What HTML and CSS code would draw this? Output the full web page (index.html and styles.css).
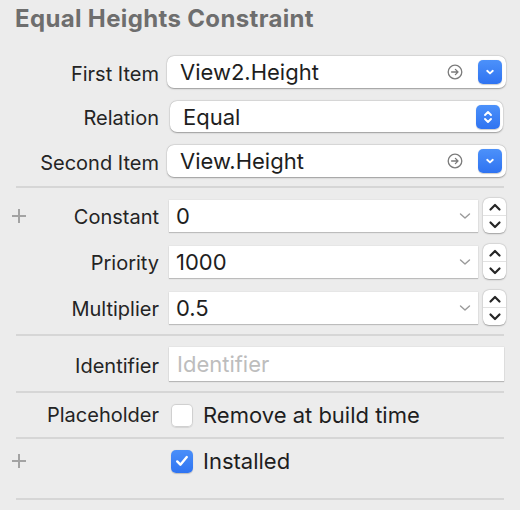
FILE: index.html
```html
<!DOCTYPE html>
<html>
<head>
<meta charset="utf-8">
<link rel="stylesheet" href="styles.css">
</head>
<body>
<div class="panel">
  <h1 class="title">Equal Heights Constraint</h1>

  <div class="group g-items">
    <div class="row">
      <div class="label"><span class="txt">First Item</span></div>
      <div class="popup">
        <span class="value">View2.Height</span>
        <svg class="go" width="16" height="16" viewBox="0 0 16 16"><circle cx="8" cy="8" r="6.8" fill="none" stroke="#7b7b7b" stroke-width="1.3"/><path d="M4.6 8h6.4M8.4 5.4L11 8l-2.6 2.6" fill="none" stroke="#7b7b7b" stroke-width="1.3" stroke-linecap="round" stroke-linejoin="round"/></svg>
        <span class="bluebtn"><svg width="12" height="12" viewBox="0 0 12 12"><path d="M3.2 4.8L6 7.4l2.8-2.6" fill="none" stroke="#fff" stroke-width="1.9" stroke-linecap="round" stroke-linejoin="round"/></svg></span>
      </div>
    </div>
    <div class="row">
      <div class="label"><span class="txt">Relation</span></div>
      <div class="popup popup-inset">
        <span class="value">Equal</span>
        <span class="bluebtn"><svg width="14" height="18" viewBox="0 0 14 18"><path d="M4 7l3-3 3 3M4 11l3 3 3-3" fill="none" stroke="#fff" stroke-width="1.9" stroke-linecap="round" stroke-linejoin="round"/></svg></span>
      </div>
    </div>
    <div class="row">
      <div class="label"><span class="txt">Second Item</span></div>
      <div class="popup">
        <span class="value">View.Height</span>
        <svg class="go" width="16" height="16" viewBox="0 0 16 16"><circle cx="8" cy="8" r="6.8" fill="none" stroke="#7b7b7b" stroke-width="1.3"/><path d="M4.6 8h6.4M8.4 5.4L11 8l-2.6 2.6" fill="none" stroke="#7b7b7b" stroke-width="1.3" stroke-linecap="round" stroke-linejoin="round"/></svg>
        <span class="bluebtn"><svg width="12" height="12" viewBox="0 0 12 12"><path d="M3.2 4.8L6 7.4l2.8-2.6" fill="none" stroke="#fff" stroke-width="1.9" stroke-linecap="round" stroke-linejoin="round"/></svg></span>
      </div>
    </div>
  </div>

  <div class="sep"></div>

  <div class="group g-values">
    <div class="row row-step">
      <div class="label"><span class="plus"></span><span class="txt">Constant</span></div>
      <div class="combo-wrap">
        <div class="combo">
          <span class="value">0</span>
          <svg class="chev" width="12" height="8" viewBox="0 0 12 8"><path d="M1.5 2l4.5 4 4.5-4" fill="none" stroke="#9a9a9a" stroke-width="1.4" stroke-linecap="round" stroke-linejoin="round"/></svg>
        </div>
        <div class="stepper">
          <span class="half"><svg width="14" height="10" viewBox="0 0 14 10"><path d="M2.5 7.5L7 3l4.5 4.5" fill="none" stroke="#262626" stroke-width="2.2" stroke-linecap="round" stroke-linejoin="round"/></svg></span>
          <span class="half half-down"><svg width="14" height="10" viewBox="0 0 14 10"><path d="M2.5 2.5L7 7l4.5-4.5" fill="none" stroke="#262626" stroke-width="2.2" stroke-linecap="round" stroke-linejoin="round"/></svg></span>
        </div>
      </div>
    </div>
    <div class="row row-step">
      <div class="label"><span class="txt">Priority</span></div>
      <div class="combo-wrap">
        <div class="combo">
          <span class="value">1000</span>
          <svg class="chev" width="12" height="8" viewBox="0 0 12 8"><path d="M1.5 2l4.5 4 4.5-4" fill="none" stroke="#9a9a9a" stroke-width="1.4" stroke-linecap="round" stroke-linejoin="round"/></svg>
        </div>
        <div class="stepper">
          <span class="half"><svg width="14" height="10" viewBox="0 0 14 10"><path d="M2.5 7.5L7 3l4.5 4.5" fill="none" stroke="#262626" stroke-width="2.2" stroke-linecap="round" stroke-linejoin="round"/></svg></span>
          <span class="half half-down"><svg width="14" height="10" viewBox="0 0 14 10"><path d="M2.5 2.5L7 7l4.5-4.5" fill="none" stroke="#262626" stroke-width="2.2" stroke-linecap="round" stroke-linejoin="round"/></svg></span>
        </div>
      </div>
    </div>
    <div class="row row-step">
      <div class="label"><span class="txt">Multiplier</span></div>
      <div class="combo-wrap">
        <div class="combo">
          <span class="value">0.5</span>
          <svg class="chev" width="12" height="8" viewBox="0 0 12 8"><path d="M1.5 2l4.5 4 4.5-4" fill="none" stroke="#9a9a9a" stroke-width="1.4" stroke-linecap="round" stroke-linejoin="round"/></svg>
        </div>
        <div class="stepper">
          <span class="half"><svg width="14" height="10" viewBox="0 0 14 10"><path d="M2.5 7.5L7 3l4.5 4.5" fill="none" stroke="#262626" stroke-width="2.2" stroke-linecap="round" stroke-linejoin="round"/></svg></span>
          <span class="half half-down"><svg width="14" height="10" viewBox="0 0 14 10"><path d="M2.5 2.5L7 7l4.5-4.5" fill="none" stroke="#262626" stroke-width="2.2" stroke-linecap="round" stroke-linejoin="round"/></svg></span>
        </div>
      </div>
    </div>
  </div>

  <div class="sep"></div>

  <div class="group g-ident">
    <div class="row">
      <div class="label"><span class="txt">Identifier</span></div>
      <div class="textfield"><span class="placeholder">Identifier</span></div>
    </div>
  </div>

  <div class="sep"></div>

  <div class="group g-place">
    <div class="row">
      <div class="label"><span class="txt">Placeholder</span></div>
      <div class="check-row">
        <span class="checkbox"></span>
        <span class="value">Remove at build time</span>
      </div>
    </div>
  </div>

  <div class="sep"></div>

  <div class="group g-install">
    <div class="row">
      <div class="label"><span class="plus"></span></div>
      <div class="check-row">
        <span class="checkbox checked"><svg width="18" height="18" viewBox="0 0 18 18"><path d="M4.2 9.4l3.2 3.3 6.4-7.6" fill="none" stroke="#fff" stroke-width="2.4" stroke-linecap="round" stroke-linejoin="round"/></svg></span>
        <span class="value">Installed</span>
      </div>
    </div>
  </div>

  <div class="sep"></div>
</div>
</body>
</html>
```

FILE: styles.css
```css
* { box-sizing: border-box; }

html, body {
  margin: 0;
  padding: 0;
  background: #ececec;
}

body {
  width: 520px;
  height: 510px;
  overflow: hidden;
  font-family: Inter, "Noto Sans", "Liberation Sans", sans-serif;
  color: #232323;
}

.panel {
  padding: 0 14px 0 12px;
}

.title {
  margin: 0;
  padding: 5px 0 0 3px;
  height: 32px;
  font-size: 24px;
  line-height: 27px;
  font-weight: 700;
  color: #6e6e6e;
  letter-spacing: 0.35px;
  white-space: nowrap;
}

.group {
  display: flex;
  flex-direction: column;
}

.row {
  display: grid;
  grid-template-columns: 147px 1fr;
  column-gap: 8px;
  align-items: center;
}

.label {
  display: flex;
  align-items: center;
  justify-content: flex-end;
  font-size: 20px;
  color: #242424;
  white-space: nowrap;
}

.label .txt {
  padding-top: 3px;
}

.g-place .label .txt {
  padding-top: 0;
}

.label .plus {
  margin-right: auto;
  width: 14px;
  height: 14px;
  background:
    linear-gradient(#a3a3a3, #a3a3a3) center / 14px 2px no-repeat,
    linear-gradient(#a3a3a3, #a3a3a3) center / 2px 14px no-repeat;
}

.value {
  font-size: 22px;
  color: #1e1e1e;
  white-space: nowrap;
}

.sep {
  height: 2px;
  background: #d6d6d6;
  margin: 0 2px 0 4px;
}

/* group 1: popups */
.g-items {
  padding-top: 24px;
  padding-bottom: 9px;
  row-gap: 12.5px;
}

.g-items .row {
  height: 32px;
}

.popup {
  height: 32px;
  background: #fff;
  border-radius: 7px;
  box-shadow: 0 0.5px 1.5px rgba(0, 0, 0, 0.32), 0 0 0 0.5px rgba(0, 0, 0, 0.06);
  display: flex;
  align-items: center;
  padding: 0 4px 0 13px;
}

.popup .value {
  flex: 1;
}

.popup-inset {
  margin: 0 3px;
  padding-right: 3px;
  height: 31px;
}

.go {
  margin-right: 15px;
}

.bluebtn {
  width: 24px;
  height: 24px;
  border-radius: 5px;
  background: linear-gradient(#4c91fa, #2f73f1);
  display: flex;
  align-items: center;
  justify-content: center;
  box-shadow: 0 0.5px 1px rgba(0, 0, 0, 0.2);
}

/* group 2: combo + stepper */
.g-values {
  padding-top: 10px;
  padding-bottom: 9px;
  row-gap: 11px;
}

.row-step {
  height: 35px;
}

.combo-wrap {
  display: flex;
  align-items: center;
  gap: 5px;
  padding-left: 2px;
}

.combo {
  flex: 1;
  height: 32px;
  background: #fff;
  box-shadow: 0 1px 1px rgba(0, 0, 0, 0.18), 0 0 0 0.5px rgba(0, 0, 0, 0.05);
  display: flex;
  align-items: center;
  padding: 0 7px 0 7px;
}

.combo .value {
  flex: 1;
}

.stepper {
  width: 23px;
  height: 35px;
  background: #fff;
  border-radius: 6px;
  box-shadow: 0 0.5px 1.5px rgba(0, 0, 0, 0.3), 0 0 0 0.5px rgba(0, 0, 0, 0.06);
  display: flex;
  flex-direction: column;
}

.half {
  flex: 1;
  display: flex;
  align-items: center;
  justify-content: center;
}

.half-down {
  border-top: 1px solid #e2e2e2;
}

/* group 3: identifier */
.g-ident {
  padding-top: 11px;
  padding-bottom: 10px;
}

.textfield {
  margin-left: 2px;
  margin-right: 2px;
  height: 34px;
  background: #fff;
  box-shadow: 0 1px 1px rgba(0, 0, 0, 0.2), 0 0 0 0.5px rgba(0, 0, 0, 0.06);
  display: flex;
  align-items: center;
  padding-left: 8px;
}

.placeholder {
  font-size: 22px;
  color: #bdbdbd;
}

/* checkboxes */
.g-place .row {
  height: 44px;
}

.g-install {
  padding-top: 9px;
  padding-bottom: 26px;
}

.g-install .row {
  height: 24px;
}

.check-row {
  display: flex;
  align-items: center;
  gap: 10px;
  padding-left: 4px;
}

.checkbox {
  width: 22px;
  height: 23px;
  border-radius: 5px;
  background: #fff;
  box-shadow: 0 0 0 1px #d0d0d0 inset, 0 0.5px 1px rgba(0, 0, 0, 0.1);
  display: flex;
  align-items: center;
  justify-content: center;
}

.checkbox.checked {
  background: linear-gradient(#4a8ff9, #2f74f2);
  box-shadow: 0 0.5px 1px rgba(0, 0, 0, 0.2);
}
```
